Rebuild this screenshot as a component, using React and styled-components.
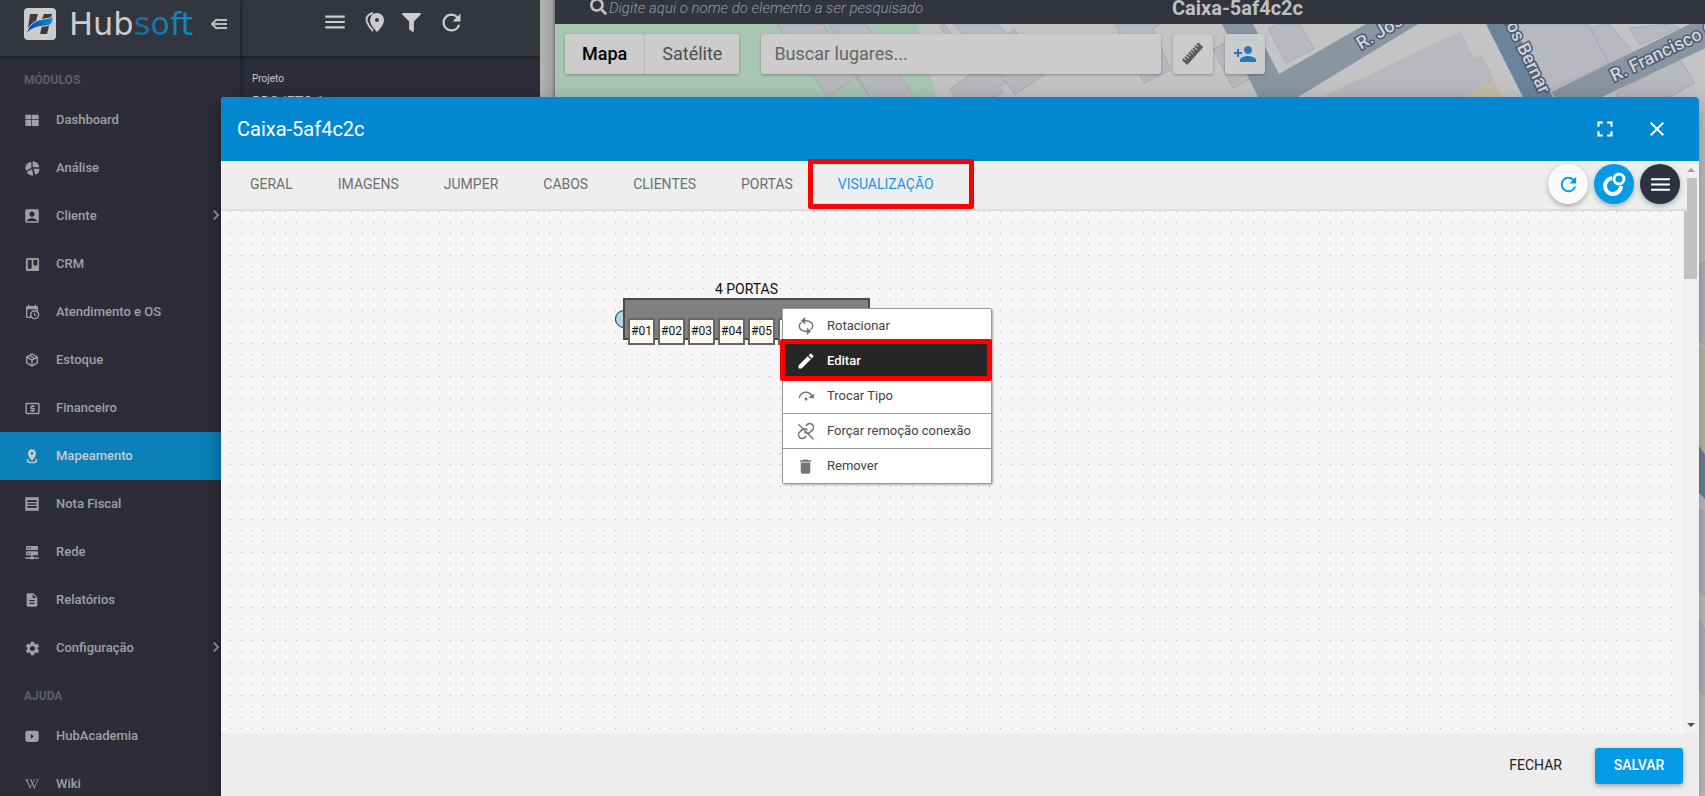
import React, { useState } from "react";
import styled, { createGlobalStyle } from "styled-components";
import {
  MdAccountBox,
  MdChevronRight,
  MdClose,
  MdDelete,
  MdDescription,
  MdEdit,
  MdFullscreen,
  MdLocalAtm,
  MdMenu,
  MdPersonAdd,
  MdRefresh,
  MdSettings,
} from "react-icons/md";
import { FaFilter, FaSearch, FaTrello, FaWikipediaW } from "react-icons/fa";

const Icon = ({ d, size = 16 }) => (
  <svg
    width={size}
    height={size}
    viewBox="0 0 24 24"
    fill="currentColor"
    fillRule="evenodd"
    aria-hidden="true"
  >
    <path d={d} />
  </svg>
);

const PATHS = {
  dashboard: "M2 4H11V11H2ZM12 4H22V11H12ZM2 12H11V21H2ZM12 12H22V21H12Z",
  pie: "M13 2A10 10 0 0 1 23 11H13ZM11 3V12L3 16A9 9 0 0 1 11 3ZM12 14L14 23A10 10 0 0 1 4 18ZM14 13H23A9 9 0 0 1 17 22Z",
  calendar:
    "M15,13H16.5V15.82L18.94,17.23L18.19,18.53L15,16.69V13M19,8H5V19H9.67C9.24,18.09 9,17.07 9,16A7,7 0 0,1 16,9C17.07,9 18.09,9.24 19,9.67V8M5,21C3.89,21 3,20.1 3,19V5C3,3.89 3.89,3 5,3H6V1H8V3H16V1H18V3H19A2,2 0 0,1 21,5V11.1C22.24,12.36 23,14.09 23,16A7,7 0 0,1 16,23C14.09,23 12.36,22.24 11.1,21H5M16,11.15A4.85,4.85 0 0,0 11.15,16C11.15,18.68 13.32,20.85 16,20.85A4.85,4.85 0 0,0 20.85,16C20.85,13.32 18.68,11.15 16,11.15Z",
  box: "M21,16.5C21,16.88 20.79,17.21 20.47,17.38L12.57,21.82C12.41,21.94 12.21,22 12,22C11.79,22 11.59,21.94 11.43,21.82L3.53,17.38C3.21,17.21 3,16.88 3,16.5V7.5C3,7.12 3.21,6.79 3.53,6.62L11.43,2.18C11.59,2.06 11.79,2 12,2C12.21,2 12.41,2.06 12.57,2.18L20.47,6.62C20.79,6.79 21,7.12 21,7.5V16.5M12,4.15L10.11,5.22L16,8.61L17.96,7.5L12,4.15M6.04,7.5L12,10.85L13.96,9.75L8.08,6.35L6.04,7.5M5,15.91L11,19.29V12.58L5,9.21V15.91M19,15.91V9.21L13,12.58V19.29L19,15.91Z",
  marker:
    "M12,2C15.31,2 18,4.66 18,7.95C18,12.41 12,19 12,19C12,19 6,12.41 6,7.95C6,4.66 8.69,2 12,2M12,6A2,2 0 0,0 10,8A2,2 0 0,0 12,10A2,2 0 0,0 14,8A2,2 0 0,0 12,6M20,19C20,21.21 16.42,23 12,23C7.58,23 4,21.21 4,19C4,17.71 5.22,16.56 7.11,15.83L7.75,16.74C6.67,17.19 6,17.81 6,18.5C6,19.88 8.69,21 12,21C15.31,21 18,19.88 18,18.5C18,17.81 17.33,17.19 16.25,16.74L16.89,15.83C18.78,16.56 20,17.71 20,19Z",
  note: "M2 2V22H22V2ZM5 6V9H19V6ZM5 11V13H19V11ZM5 15V18H19V15Z",
  server:
    "M13,19H14A1,1 0 0,1 15,20H22V22H15A1,1 0 0,1 14,23H10A1,1 0 0,1 9,22H2V20H9A1,1 0 0,1 10,19H11V17H4A1,1 0 0,1 3,16V12A1,1 0 0,1 4,11H20A1,1 0 0,1 21,12V16A1,1 0 0,1 20,17H13V19M4,3H20A1,1 0 0,1 21,4V8A1,1 0 0,1 20,9H4A1,1 0 0,1 3,8V4A1,1 0 0,1 4,3M9,7H10V5H9V7M9,15H10V13H9V15M5,5V7H7V5H5M5,13V15H7V13H5Z",
  play: "M5 4Q2 4 2 8V17Q2 21 5 21H19Q22 21 22 17V8Q22 4 19 4ZM10 9L15 12.5L10 16Z",
  stepOver:
    "M12,14A2,2 0 0,1 14,16A2,2 0 0,1 12,18A2,2 0 0,1 10,16A2,2 0 0,1 12,14M23.46,8.86L21.87,15.75L15,14.16L18.8,11.78C17.39,9.5 14.87,8 12,8C8.05,8 4.77,10.86 4.12,14.63L2.15,14.28C2.96,9.58 7.06,6 12,6C15.58,6 18.73,7.89 20.5,10.72L23.46,8.86Z",
};

const modules = [
  { label: "Dashboard", icon: <Icon d={PATHS.dashboard} /> },
  { label: "Análise", icon: <Icon d={PATHS.pie} /> },
  { label: "Cliente", icon: <MdAccountBox size={18} />, more: true },
  { label: "CRM", icon: <FaTrello size={15} /> },
  { label: "Atendimento e OS", icon: <Icon d={PATHS.calendar} /> },
  { label: "Estoque", icon: <Icon d={PATHS.box} /> },
  { label: "Financeiro", icon: <MdLocalAtm size={17} /> },
  { label: "Mapeamento", icon: <Icon d={PATHS.marker} />, active: true },
  { label: "Nota Fiscal", icon: <Icon d={PATHS.note} /> },
  { label: "Rede", icon: <Icon d={PATHS.server} /> },
  { label: "Relatórios", icon: <MdDescription size={16} /> },
  { label: "Configuração", icon: <MdSettings size={17} />, more: true },
];

const help = [
  { label: "HubAcademia", icon: <Icon d={PATHS.play} /> },
  { label: "Wiki", icon: <FaWikipediaW size={14} /> },
];

const tabs = ["Geral", "Imagens", "Jumper", "Cabos", "Clientes", "Portas", "Visualização"];

const ports = ["#01", "#02", "#03", "#04", "#05", "#06", "#07", "#08"];

const RotateIcon = () => (
  <svg width="18" height="18" viewBox="0 0 24 24" fill="none" stroke="currentColor" strokeWidth="2">
    <path d="M9 5H13Q21 6 21 12Q21 15 18 17" />
    <path d="M15 19H11Q3 18 3 12Q3 9 6 7" />
    <path d="M11 0V10L5 5ZM13 14V24L19 19Z" fill="currentColor" stroke="none" />
  </svg>
);

const UnlinkIcon = () => (
  <svg width="18" height="18" viewBox="0 0 24 24" fill="none" stroke="currentColor" strokeWidth="2">
    <path d="M10 13a5 5 0 0 0 7.54.54l3-3a5 5 0 0 0-7.07-7.07l-1.72 1.71" />
    <path d="M14 11a5 5 0 0 0-7.54-.54l-3 3a5 5 0 0 0 7.07 7.07l1.71-1.71" />
    <path d="M2 3L22 23" />
  </svg>
);

const RulerIcon = () => (
  <svg width="24" height="24" viewBox="0 0 24 24" aria-hidden="true">
    <g transform="rotate(-48 12 12)">
      <rect y="8" width="24" height="7" fill="currentColor" />
      <path d="M3 8V11M6 8V12M9 8V11M12 8V12M15 8V11M18 8V12M21 8V11" stroke="#cccccc" />
    </g>
  </svg>
);

const actions = [
  { label: "Rotacionar", icon: <RotateIcon /> },
  { label: "Editar", icon: <MdEdit size={20} />, selected: true },
  { label: "Trocar Tipo", icon: <Icon d={PATHS.stepOver} size={18} /> },
  { label: "Forçar remoção conexão", icon: <UnlinkIcon /> },
  { label: "Remover", icon: <MdDelete size={19} /> },
];

const LogoMark = () => (
  <svg width="32" height="32" viewBox="0 0 32 32" aria-hidden="true">
    <defs>
      <linearGradient id="swoosh">
        <stop offset="0" stopColor="#0b45b5" />
        <stop offset="1" stopColor="#0a8ad0" />
      </linearGradient>
    </defs>
    <rect width="32" height="32" rx="4" fill="#cccccc" />
    <path d="M6 6H14L11 16L4 20ZM20 6H28L23 26H16L18 18H13L17 13Z" fill="#3c3c3c" />
    <path d="M2 26Q6 12 20 11Q26 11 29 8Q30 17 22 18Q9 18 2 26Z" fill="url(#swoosh)" stroke="#cccccc" />
  </svg>
);

const CollapseIcon = () => (
  <svg width="16" height="12" viewBox="0 0 16 12" fill="none" stroke="currentColor" strokeWidth="2">
    <path d="M6 1L1 6L6 11M2 6H16M6 2H16M6 10H16" />
  </svg>
);

const PinsIcon = () => (
  <svg width="20" height="20" viewBox="0 0 20 20" fill="currentColor" fillRule="evenodd">
    <path d="M12 1A7 7 0 0 1 19 8Q19 13 12 20Q5 13 5 8A7 7 0 0 1 12 1ZM12 6A2 2 0 0 0 12 10A2 2 0 0 0 12 6Z" />
    <path d="M8 1Q0 3 2 10Q4 15 8 19" fill="none" stroke="currentColor" strokeWidth="2" />
  </svg>
);

const OrbitIcon = () => (
  <svg width="24" height="24" viewBox="0 0 24 24" fill="none" stroke="currentColor" strokeWidth="4">
    <path d="M10 6A8 8 0 1 0 19 14" />
    <circle cx="17" cy="7" r="5" strokeWidth="3" />
  </svg>
);

const StreetMap = () => (
  <MapSvg aria-hidden="true">
    <g transform="translate(-555 -24)">
      <path d="M555 24H918L936 97V800H555Z" fill="#a9c6b5" />
      <g fill="#b8b9be" stroke="#a8a9b6">
        <path d="M777 24H823L870 97L855 77L828 97ZM829 24H866L914 97H870Z" />
        <path d="M953 24H998L1008 34L1014 29L1045 74L1015 95L1001 76Z" />
        <path d="M940 26L945 24L951 35L947 38Z" />
        <path d="M950 89L971 74H1000L1005 83L999 87L1003 92L995 97H955Z" />
        <path d="M1115 24H1160L1153 29L1171 70L1144 83Z" />
        <path d="M1213 49L1227 42L1252 78L1233 88Z" />
        <path d="M1268 28L1278 24H1300L1314 49L1286 63Z" />
        <path d="M1322 97L1461 31L1474 58L1482 55L1494 80L1461 97Z" stroke="none" />
        <path d="M1511 24H1588L1609 63L1551 90Z" />
        <path d="M1590 27L1609 24L1634 53L1609 64Z" />
        <path d="M1629 28L1671 24L1679 28L1640 45Z" />
        <path d="M1617 92L1679 58L1695 83L1670 97H1617Z" />
        <path d="M1699 264L1710 260V350L1699 340ZM1699 510L1710 514V600L1699 590ZM1699 620L1710 640V700L1699 690Z" />
      </g>
      <path d="M1461 97L1494 80L1502 97ZM1695 348H1710V470L1695 447Z" fill="#c4bdab" />
      <path
        d="M1222 24H1253L1279 74L1366 24H1418L1298 97V120H1258V97ZM1551 92L1690 24H1710V46L1602 97H1555Z"
        fill="#8995a1"
      />
      <path d="M1486 24H1511L1553 97V120H1523V97ZM1695 440L1710 462V505L1695 488Z" fill="#6d839b" />
      <StreetName transform="translate(1361 50) rotate(-31)">R. José</StreetName>
      <StreetName transform="translate(1504 21) rotate(64)">los Bernar</StreetName>
      <StreetName transform="translate(1614 82) rotate(-26)">R. Francisco C</StreetName>
    </g>
  </MapSvg>
);

const App = () => {
  const [tab, setTab] = useState("Visualização");

  return (
    <Page>
      <GlobalStyle />

      <Sidebar>
        <Brand>
          <LogoMark />
          <BrandName>
            Hub<span>soft</span>
          </BrandName>
          <BareButton aria-label="Recolher menu">
            <CollapseIcon />
          </BareButton>
        </Brand>
        <nav>
          <SectionTitle>MÓDULOS</SectionTitle>
          {modules.map((item) => (
            <NavItem key={item.label} href="#" $active={item.active}>
              <NavIcon>{item.icon}</NavIcon>
              {item.label}
              {item.more && <MdChevronRight size={20} />}
            </NavItem>
          ))}
          <SectionTitle>AJUDA</SectionTitle>
          {help.map((item) => (
            <NavItem key={item.label} href="#">
              <NavIcon>{item.icon}</NavIcon>
              {item.label}
            </NavItem>
          ))}
        </nav>
      </Sidebar>

      <ProjectPanel>
        <PanelTools>
          <BareButton aria-label="Menu">
            <MdMenu size={26} />
          </BareButton>
          <BareButton aria-label="Marcadores">
            <PinsIcon />
          </BareButton>
          <BareButton aria-label="Filtrar">
            <FaFilter size={19} />
          </BareButton>
          <BareButton aria-label="Atualizar">
            <MdRefresh size={27} />
          </BareButton>
        </PanelTools>
        <ProjectInfo>
          <small>Projeto</small>
          <span>PROJETO 1</span>
        </ProjectInfo>
      </ProjectPanel>
      <Gutter />

      <MapArea>
        <MapBar>
          <ElementSearch>
            <FaSearch size={17} />
            <input
              aria-label="Pesquisar elemento"
              placeholder="Digite aqui o nome do elemento a ser pesquisado"
            />
          </ElementSearch>
          <strong>Caixa-5af4c2c</strong>
        </MapBar>
        <MapCanvas>
          <StreetMap />
          <MapControls>
            <MapTypes>
              <MapType $on>Mapa</MapType>
              <MapType>Satélite</MapType>
            </MapTypes>
            <PlaceSearch aria-label="Buscar lugares" placeholder="Buscar lugares..." />
            <MapButton aria-label="Medir">
              <RulerIcon />
            </MapButton>
            <MapButton aria-label="Adicionar cliente" $blue>
              <MdPersonAdd size={24} />
            </MapButton>
          </MapControls>
        </MapCanvas>
      </MapArea>

      <Overlay>
        <Dialog role="dialog" aria-labelledby="dialog-title">
          <DialogHeader>
            <h2 id="dialog-title">Caixa-5af4c2c</h2>
            <BareButton aria-label="Tela cheia">
              <MdFullscreen size={26} />
            </BareButton>
            <BareButton aria-label="Fechar janela">
              <MdClose size={24} />
            </BareButton>
          </DialogHeader>

          <DialogBody>
            <TabBar>
              <TabList role="tablist">
                {tabs.map((name) => (
                  <Tab
                    key={name}
                    role="tab"
                    aria-selected={tab === name}
                    $active={tab === name}
                    onClick={() => setTab(name)}
                  >
                    {name}
                    {name === "Visualização" && <TabMark />}
                  </Tab>
                ))}
              </TabList>
              <RoundButton aria-label="Recarregar" $bg="#fafafa" $color="#039be5">
                <MdRefresh size={23} />
              </RoundButton>
              <RoundButton aria-label="Adicionar elemento" $bg="#039be5">
                <OrbitIcon />
              </RoundButton>
              <RoundButton aria-label="Opções" $bg="#2d323e">
                <MdMenu size={25} />
              </RoundButton>
            </TabBar>

            <Canvas>
              <Splitter>
                <figcaption>4 PORTAS</figcaption>
                <InputPort />
                <SplitterBody>
                  {ports.map((port) => (
                    <Port key={port}>{port}</Port>
                  ))}
                </SplitterBody>
              </Splitter>
              <ContextMenu role="menu">
                {actions.map((action) => (
                  <MenuItem key={action.label} role="menuitem" $selected={action.selected}>
                    <MenuIcon $selected={action.selected}>{action.icon}</MenuIcon>
                    {action.label}
                    {action.selected && <MenuMark />}
                  </MenuItem>
                ))}
              </ContextMenu>
            </Canvas>

            <ScrollTrack>
              <ScrollArrow $up />
              <ScrollThumb />
              <ScrollArrow />
            </ScrollTrack>
          </DialogBody>

          <DialogFooter>
            <TextButton>FECHAR</TextButton>
            <SaveButton>SALVAR</SaveButton>
          </DialogFooter>
        </Dialog>
      </Overlay>
    </Page>
  );
};

export default App;

const GlobalStyle = createGlobalStyle`
  * {
    box-sizing: border-box;
  }

  body {
    margin: 0;
    font-family: Roboto, "Liberation Sans", sans-serif;
  }

  button,
  input {
    font-family: inherit;
  }
`;

const Page = styled.div`
  position: relative;
  display: flex;
  height: 100vh;
  overflow: hidden;
  background: #2c2d38;
`;

const Sidebar = styled.aside`
  flex: 0 0 240px;
  background: #2c2d38;
  color: #a3a3a3;
  box-shadow: 0 0 6px rgba(0, 0, 0, 0.4);
  z-index: 1;
`;

const Brand = styled.div`
  display: flex;
  align-items: center;
  height: 56px;
  padding: 0 13px 8px 24px;
  background: #34363f;
  box-shadow: 0 1px 3px rgba(0, 0, 0, 0.5);
  color: #bdbdbd;
`;

const BrandName = styled.span`
  flex: 1;
  margin-left: 13px;
  color: #cccccc;
  font-family: "DejaVu Sans", sans-serif;
  font-size: 32px;
  font-weight: 400;
  line-height: 32px;

  span {
    background: linear-gradient(90deg, #1b6aa8, #0793c4);
    background-clip: text;
    color: transparent;
  }
`;

const BareButton = styled.button`
  display: flex;
  padding: 0;
  border: 0;
  background: none;
  color: inherit;
  cursor: pointer;
`;

const SectionTitle = styled.h3`
  height: 40px;
  margin: 0;
  padding: 8px 24px 0;
  color: #5d5e66;
  font-size: 12px;
  font-weight: 700;
  line-height: 32px;
`;

const NavItem = styled.a`
  display: flex;
  align-items: center;
  height: 48px;
  padding: 0 14px 2px 24px;
  background: ${({ $active }) => ($active ? "#0b80b9" : "transparent")};
  color: ${({ $active }) => ($active ? "#cccccc" : "#a0a0a2")};
  font-size: 13px;
  font-weight: 500;
  text-decoration: none;

  > svg {
    margin-left: auto;
  }
`;

const NavIcon = styled.span`
  display: flex;
  justify-content: center;
  width: 16px;
  margin-right: 16px;
  padding-top: 2px;

  svg {
    flex: none;
  }
`;

const ProjectPanel = styled.section`
  flex: 0 0 300px;
  background: #2c2d38;
  color: #cccccc;
`;

const PanelTools = styled.div`
  display: flex;
  align-items: center;
  justify-content: center;
  gap: 17px;
  height: 56px;
  padding: 0 0 12px 6px;
  background: #34363f;
  box-shadow: 0 1px 3px rgba(0, 0, 0, 0.5);
`;

const ProjectInfo = styled.div`
  display: flex;
  flex-direction: column;
  gap: 9px;
  padding: 17px 12px;
  font-size: 14px;

  small {
    font-size: 10px;
    line-height: 12px;
  }
`;

const Gutter = styled.div`
  flex: 0 0 15px;
  background: linear-gradient(90deg, #b4b4b4, #a4a4a4 80%, #777777);
`;

const MapArea = styled.main`
  flex: 1;
  display: flex;
  flex-direction: column;
  min-width: 0;
`;

const MapBar = styled.header`
  display: grid;
  grid-template-columns: 582px 1fr;
  grid-template-rows: 16px;
  align-items: center;
  height: 24px;
  padding: 0 0 8px 35px;
  background: #32343f;
  overflow: hidden;
  color: #c0c0c0;

  strong {
    font-size: 20px;
    font-weight: 700;
    line-height: 16px;
  }
`;

const ElementSearch = styled.label`
  display: flex;
  align-items: center;
  height: 16px;

  svg {
    flex: none;
    margin-bottom: 4px;
  }

  input {
    flex: 1;
    height: 16px;
    padding: 0 2px;
    border: 0;
    background: none;
    font-size: 15px;
    font-style: italic;
    font-weight: 300;
  }

  input::placeholder {
    color: #9a9aa0;
  }
`;

const MapCanvas = styled.div`
  position: relative;
  flex: 1;
  background: #c4c4c4;
  overflow: hidden;
`;

const MapSvg = styled.svg`
  position: absolute;
  width: 100%;
  height: 100%;
`;

const StreetName = styled.text`
  fill: #d2d4d8;
  stroke: #4c5a74;
  stroke-width: 3px;
  paint-order: stroke;
  font-size: 18px;
  font-weight: 500;
`;

const MapControls = styled.div`
  position: relative;
  display: flex;
  gap: 12px;
  padding: 10px;
`;

const MapTypes = styled.div`
  display: flex;
  margin-right: 10px;
  border-radius: 3px;
  box-shadow: 0 1px 3px rgba(0, 0, 0, 0.3);
`;

const MapType = styled.button`
  height: 40px;
  padding: 0 17px 2px;
  border: 0;
  border-left: ${({ $on }) => ($on ? "0" : "1px solid #bbbbbb")};
  border-radius: 3px;
  background: #cccccc;
  color: ${({ $on }) => ($on ? "#000000" : "#4d4d4d")};
  font-size: 18px;
  font-weight: ${({ $on }) => ($on ? 500 : 400)};
`;

const PlaceSearch = styled.input`
  width: 400px;
  height: 40px;
  padding: 0 13px 2px;
  border: 0;
  border-radius: 3px;
  background: #cccccc;
  box-shadow: 0 1px 3px rgba(0, 0, 0, 0.3);
  font-size: 18px;

  &::placeholder {
    color: #666666;
  }
`;

const MapButton = styled.button`
  display: flex;
  align-items: center;
  justify-content: center;
  width: 40px;
  height: 40px;
  padding: 0;
  border: 0;
  border-radius: 3px;
  background: #cccccc;
  box-shadow: 0 1px 3px rgba(0, 0, 0, 0.3);
  color: ${({ $blue }) => ($blue ? "#2179c2" : "#5a5a5a")};
`;

const Overlay = styled.div`
  position: absolute;
  inset: 0;
  z-index: 2;
  display: flex;
  padding: 97px 6px 0 221px;
`;

const Dialog = styled.section`
  flex: 1;
  display: flex;
  flex-direction: column;
  min-width: 0;
  border-radius: 4px 4px 0 0;
  background: #f5f5f5;
  box-shadow:
    0 7px 8px -4px rgba(0, 0, 0, 0.2),
    0 13px 19px 2px rgba(0, 0, 0, 0.14),
    0 5px 24px 4px rgba(0, 0, 0, 0.12);
`;

const DialogHeader = styled.header`
  display: flex;
  align-items: center;
  gap: 27px;
  height: 64px;
  padding: 0 30px 0 16px;
  border-radius: 4px 4px 0 0;
  background: #0288d1;
  color: #ffffff;

  h2 {
    flex: 1;
    margin: 0;
    font-size: 20px;
    font-weight: 400;
  }
`;

const DialogBody = styled.div`
  flex: 1;
  display: grid;
  grid-template-columns: 1fr 5px 12px;
  grid-template-rows: 50px 1fr;
  min-height: 0;
`;

const TabBar = styled.div`
  grid-column: 1 / 3;
  grid-row: 1;
  z-index: 1;
  display: flex;
  align-items: center;
  gap: 6px;
  padding: 0 7px 2px;
  border-bottom: 2px solid #dddddd;
  background: #eeeeee;
`;

const TabList = styled.div`
  flex: 1;
  display: flex;
  gap: 1px;
`;

const Tab = styled.button`
  position: relative;
  height: 46px;
  padding: 0 22px;
  border: 0;
  background: none;
  color: ${({ $active }) => ($active ? "#1e96e6" : "#6e6e6e")};
  font-size: 14px;
  text-transform: uppercase;
  cursor: pointer;
`;

const TabMark = styled.span`
  position: absolute;
  inset: -2px -18px -2px -8px;
  border: 5px solid #ff0000;
  border-radius: 2px;
`;

const RoundButton = styled.button`
  display: flex;
  align-items: center;
  justify-content: center;
  width: 40px;
  height: 40px;
  padding: 0;
  border: 0;
  border-radius: 50%;
  background: ${({ $bg }) => $bg};
  box-shadow: 0 2px 5px rgba(0, 0, 0, 0.3);
  color: ${({ $color }) => $color || "#ffffff"};
  cursor: pointer;
`;

const Canvas = styled.div`
  position: relative;
  grid-column: 1;
  grid-row: 2;
  background: conic-gradient(from 270deg at 1px 1px, #b0b0b0 90deg, #f5f5f5 0) 9px 0 / 11px 11px;
`;

const Splitter = styled.figure`
  position: absolute;
  top: 69px;
  left: 402px;
  width: 247px;
  margin: 0;
  color: #111111;

  figcaption {
    font-size: 14px;
    line-height: 18px;
    text-align: center;
  }
`;

const InputPort = styled.span`
  position: absolute;
  top: 30px;
  left: -8px;
  width: 18px;
  height: 18px;
  border: 1px solid #222222;
  border-radius: 50%;
  background: #add8e6;
`;

const SplitterBody = styled.div`
  position: relative;
  display: flex;
  gap: 3px;
  height: 42px;
  padding: 18px 3px 0;
  border: 2px solid #4a4a4a;
  background: #808080;
`;

const Port = styled.span`
  flex: 0 0 27px;
  height: 27px;
  border: 2px solid #666666;
  background: #fffaf0;
  font-size: 12px;
  line-height: 23px;
  text-align: center;
`;

const ContextMenu = styled.div`
  position: absolute;
  top: 97px;
  left: 561px;
  width: 210px;
  border: 1px solid #999999;
  border-radius: 2px;
  background: #ffffff;
  box-shadow: 1px 1px 2px rgba(0, 0, 0, 0.3);
`;

const MenuItem = styled.button`
  position: relative;
  display: flex;
  align-items: center;
  width: 100%;
  height: 35px;
  padding: 0 12px 2px;
  border: 0;
  border-bottom: 1px solid #999999;
  background: ${({ $selected }) => ($selected ? "#262626" : "#ffffff")};
  color: ${({ $selected }) => ($selected ? "#ffffff" : "#444444")};
  font-size: 13px;
  font-weight: ${({ $selected }) => ($selected ? 500 : 400)};
  text-align: left;

  &:last-child {
    height: 34px;
    border-bottom: 0;
  }
`;

const MenuIcon = styled.span`
  display: flex;
  justify-content: center;
  width: 21px;
  margin-right: 11px;
  padding-top: 2px;
  color: ${({ $selected }) => ($selected ? "#ffffff" : "#757575")};
`;

const MenuMark = styled.span`
  position: absolute;
  z-index: 1;
  inset: -5px -1px -3px -3px;
  border: 5px solid #ff0000;
  border-radius: 2px;
`;

const ScrollTrack = styled.div`
  grid-column: 2 / 4;
  grid-row: 1 / 3;
  display: flex;
  flex-direction: column;
  align-items: center;
  padding: 7px 2px;
  background: #f1f1f1;
`;

const ScrollArrow = styled.span`
  margin: ${({ $up }) => ($up ? "0 0 6px" : "auto 0 0")};
  border: 4px solid transparent;
  border-top: ${({ $up }) => ($up ? "0" : "4px solid #505050")};
  border-bottom: ${({ $up }) => ($up ? "4px solid #a0a0a0" : "0")};
`;

const ScrollThumb = styled.span`
  width: 13px;
  height: 101px;
  background: #c1c1c1;
`;

const DialogFooter = styled.footer`
  display: flex;
  align-items: center;
  justify-content: flex-end;
  gap: 17px;
  height: 62px;
  padding: 2px 16px 0;
  background: #ededed;
`;

const TextButton = styled.button`
  height: 36px;
  padding: 0 16px 2px;
  border: 0;
  background: none;
  color: #222222;
  font-size: 14px;
  cursor: pointer;
`;

const SaveButton = styled(TextButton)`
  width: 88px;
  border-radius: 3px;
  background: #039be5;
  box-shadow: 0 2px 5px rgba(0, 0, 0, 0.3);
  color: #ffffff;
  font-weight: 500;
`;
